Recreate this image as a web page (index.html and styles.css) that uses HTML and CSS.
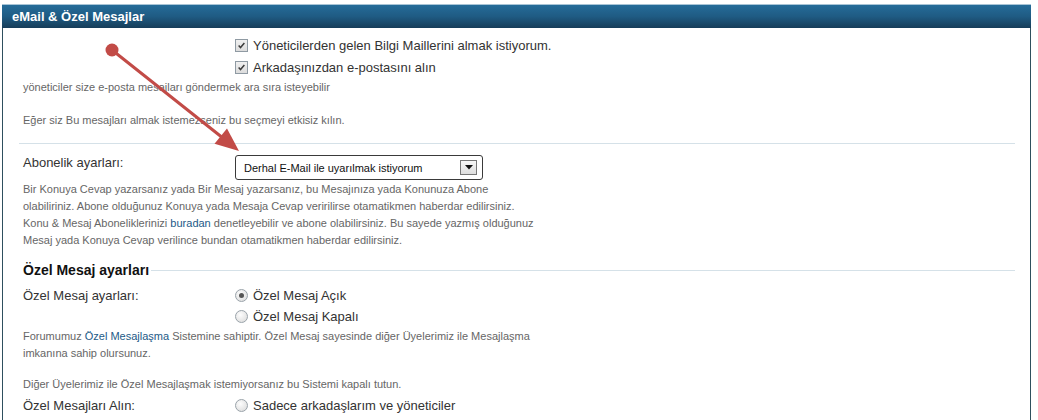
FILE: index.html
```html
<!DOCTYPE html>
<html lang="tr">
<head>
<meta charset="utf-8">
<title>eMail &amp; Özel Mesajlar</title>
<link rel="stylesheet" href="styles.css">
</head>
<body>
<div class="panel">
  <div class="panel-head">eMail &amp; Özel Mesajlar</div>
  <div class="panel-body">
    <div class="checks">
      <label class="opt"><span class="cb"><svg viewBox="0 0 11 11" width="9" height="9"><path d="M2 5.5 L4.3 8 L9 2.5" fill="none" stroke="#3b3b3b" stroke-width="1.8"/></svg></span>Yöneticilerden gelen Bilgi Maillerini almak istiyorum.</label>
      <label class="opt"><span class="cb"><svg viewBox="0 0 11 11" width="9" height="9"><path d="M2 5.5 L4.3 8 L9 2.5" fill="none" stroke="#3b3b3b" stroke-width="1.8"/></svg></span>Arkadaşınızdan e-postasını alın</label>
    </div>
    <p class="desc d1">yöneticiler size e-posta mesajları göndermek ara sıra isteyebilir</p>
    <p class="desc d2">Eğer siz Bu mesajları almak istemezseniz bu seçmeyi etkisiz kılın.</p>
    <div class="rule"></div>
    <div class="field sub-row">
      <div class="label">Abonelik ayarları:</div>
      <div class="select"><span>Derhal E-Mail ile uyarılmak istiyorum</span><span class="sel-btn"><svg viewBox="0 0 8 5" width="8" height="5"><path d="M0 0 H8 L4 4.5 Z" fill="#111"/></svg></span></div>
    </div>
    <p class="desc para">Bir Konuya Cevap yazarsanız yada Bir Mesaj yazarsanız, bu Mesajınıza yada Konunuza Abone<br>olabiliriniz. Abone olduğunuz Konuya yada Mesaja Cevap veririlirse otamatikmen haberdar edilirsiniz.<br>Konu &amp; Mesaj Aboneliklerinizi <a href="#">buradan</a> denetleyebilir ve abone olabilirsiniz. Bu sayede yazmış olduğunuz<br>Mesaj yada Konuya Cevap verilince bundan otamatikmen haberdar edilirsiniz.</p>
    <div class="section-title"><span>Özel Mesaj ayarları</span></div>
    <div class="field pm-row">
      <div class="label">Özel Mesaj ayarları:</div>
      <div class="radios">
        <label class="opt"><span class="rd on"></span>Özel Mesaj Açık</label>
        <label class="opt"><span class="rd"></span>Özel Mesaj Kapalı</label>
      </div>
    </div>
    <p class="desc para2">Forumumuz <a href="#">Özel Mesajlaşma</a> Sistemine sahiptir. Özel Mesaj sayesinde diğer Üyelerimiz ile Mesajlaşma<br>imkanına sahip olursunuz.</p>
    <p class="desc para3">Diğer Üyelerimiz ile Özel Mesajlaşmak istemiyorsanız bu Sistemi kapalı tutun.</p>
    <div class="field recv-row">
      <div class="label">Özel Mesajları Alın:</div>
      <div class="radios">
        <label class="opt"><span class="rd"></span>Sadece arkadaşlarım ve yöneticiler</label>
      </div>
    </div>
  </div>
</div>
<svg class="annot" width="1038" height="420" viewBox="0 0 1038 420">
  <line x1="112" y1="50" x2="221" y2="136.5" stroke="#c24b47" stroke-width="3" stroke-linecap="round"/>
  <circle cx="112" cy="50" r="6.5" fill="#c24b47"/>
  <polygon points="239,151 214.5,143.8 227,128.5" fill="#c24b47"/>
</svg>
</body>
</html>
```
FILE: styles.css
```css
html, body {
  margin: 0;
  padding: 0;
  background: #fff;
}
body {
  font-family: "Liberation Sans", Arial, sans-serif;
  color: #333;
  position: relative;
  width: 1038px;
  height: 420px;
  overflow: hidden;
}
.panel {
  margin: 4px 0 0 2px;
  width: 1029px;
  border-left: 1px solid #2e4f5e;
  border-right: 1px solid #2e4f5e;
  box-sizing: border-box;
  height: 430px;
}
.panel-head {
  height: 23px;
  border-top: 1px solid #a8c4d6;
  background: linear-gradient(#256c99, #1f5b83 50%, #163d59);
  color: #fff;
  font-weight: bold;
  font-size: 13px;
  line-height: 23px;
  padding-left: 10px;
  margin-left: -1px;
  margin-right: -1px;
}
.panel-body {
  padding: 0 15px 0 16px;
}
.checks {
  padding: 6px 0 0 216px;
}
.opt {
  display: flex;
  align-items: center;
  height: 22px;
  font-size: 13px;
  color: #333;
}
.cb {
  width: 11px;
  height: 11px;
  border: 1px solid #8f9aa3;
  background: linear-gradient(#f0f0f0, #dcdcdc);
  margin-right: 5px;
  display: flex;
  align-items: center;
  justify-content: center;
  box-sizing: content-box;
}
.desc {
  margin: 0;
  padding-left: 4px;
  font-size: 11px;
  color: #666;
  line-height: 17px;
}
.desc a {
  color: #1d5a87;
  text-decoration: none;
}
.d1 { margin-top: 1px; }
.d2 { margin-top: 16px; }
.rule {
  height: 1px;
  background: #d5e1e8;
  margin-top: 14px;
}
.field {
  display: flex;
}
.label {
  width: 212px;
  padding-left: 4px;
  font-size: 13px;
  color: #333;
}
.sub-row {
  margin-top: 11px;
}
.sub-row .label {
  line-height: 16px;
}
.select {
  width: 248px;
  height: 25px;
  box-sizing: border-box;
  border: 1px solid #3a3a3a;
  border-radius: 3px;
  display: flex;
  align-items: center;
  justify-content: space-between;
  padding: 0 5px 0 8px;
  font-size: 11px;
  color: #111;
}
.sel-btn {
  width: 15px;
  height: 13px;
  border: 1px solid #777;
  background: linear-gradient(#f7f7f7, #dedede);
  display: flex;
  align-items: center;
  justify-content: center;
}
.para { margin-top: 1px; }
.section-title {
  display: flex;
  align-items: center;
  margin-top: 12px;
  height: 18px;
  padding-left: 4px;
  font-size: 14px;
  font-weight: bold;
  color: #111;
}
.section-title::after {
  content: "";
  flex: 1;
  height: 1px;
  background: #d5e1e8;
  margin-left: 2px;
}
.pm-row { margin-top: 6px; }
.field .label { line-height: 21px; }
.sub-row .label { line-height: 16px; }
.radios .opt { height: 21px; }
.rd {
  width: 11px;
  height: 11px;
  border-radius: 50%;
  border: 1px solid #9aa3aa;
  background: radial-gradient(circle at 40% 35%, #fdfdfd, #d8d8d8);
  margin-right: 5px;
  position: relative;
  box-sizing: content-box;
}
.rd.on::after {
  content: "";
  position: absolute;
  left: 3px;
  top: 3px;
  width: 5px;
  height: 5px;
  border-radius: 50%;
  background: #555;
}
.para2 { margin-top: 1px; }
.para3 { margin-top: 14px; }
.recv-row { margin-top: 2px; }
.annot {
  position: absolute;
  left: 0;
  top: 0;
  pointer-events: none;
}
```
